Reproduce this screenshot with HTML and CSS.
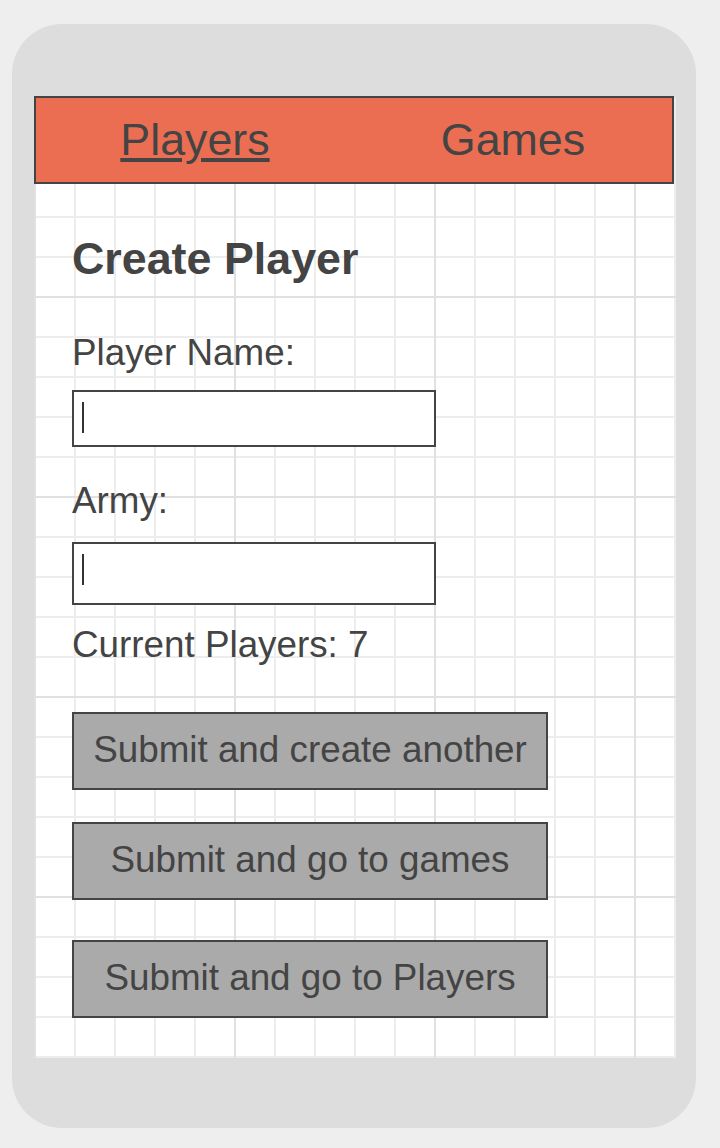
FILE: index.html
```html
<!DOCTYPE html>
<html lang="en">
<head>
<meta charset="utf-8">
<title>Create Player</title>
<link rel="stylesheet" href="styles.css">
</head>
<body>
<div class="phone">
  <div class="screen">
    <nav class="nav">
      <a class="nav-link nav-link--active" href="#">Players</a>
      <a class="nav-link" href="#">Games</a>
    </nav>
    <main class="form">
      <h1 class="title">Create Player</h1>
      <div class="label label--name">Player Name:</div>
      <div class="field field--name"><span class="caret"></span></div>
      <div class="label label--army">Army:</div>
      <div class="field field--army"><span class="caret"></span></div>
      <div class="label label--count">Current Players: 7</div>
      <button class="btn btn--first">Submit and create another</button>
      <button class="btn btn--second">Submit and go to games</button>
      <button class="btn btn--third">Submit and go to Players</button>
    </main>
  </div>
</div>
</body>
</html>
```

FILE: styles.css
```css
html, body {
  margin: 0;
  padding: 0;
}

body {
  background: #eeeeee;
  font-family: "Liberation Sans", Arial, sans-serif;
  color: #444444;
  width: 720px;
  height: 1148px;
  overflow: hidden;
}

.phone {
  box-sizing: border-box;
  margin: 24px 0 0 12px;
  width: 684px;
  height: 1104px;
  padding: 72px 20px 70px 22px;
  border-radius: 50px;
  background: #dddddd;
}

.screen {
  width: 642px;
  height: 962px;
  background-color: #ffffff;
  background-image:
    linear-gradient(to right, #e1e1e1 2px, transparent 2px),
    linear-gradient(to bottom, #e1e1e1 2px, transparent 2px),
    linear-gradient(to right, #ededed 2px, transparent 2px),
    linear-gradient(to bottom, #ededed 2px, transparent 2px);
  background-size: 200px 200px, 200px 200px, 40px 40px, 40px 40px;
}

.nav {
  box-sizing: border-box;
  display: flex;
  width: 640px;
  height: 88px;
  border: 2px solid #444444;
  background: #ec6e52;
  padding-bottom: 1px;
}

.nav-link {
  flex: 1;
  text-align: center;
  font-size: 44.8px;
  line-height: 83px;
  color: #444444;
  text-decoration: none;
}

.nav-link--active {
  text-decoration: underline;
}

.form {
  padding-left: 38px;
}

.title {
  margin: 49px 0 0;
  font-size: 44.8px;
  font-weight: bold;
  line-height: 51px;
}

.label {
  font-size: 36.8px;
  line-height: 41px;
}

.label--name {
  margin-top: 48px;
}

.label--army {
  margin-top: 33px;
}

.label--count {
  margin-top: 19px;
}

.field {
  box-sizing: border-box;
  width: 364px;
  border: 2px solid #444444;
  background: #ffffff;
  padding: 10px 0 0 8px;
}

.field--name {
  margin-top: 17px;
  height: 57px;
}

.field--army {
  margin-top: 21px;
  height: 63px;
}

.caret {
  display: block;
  width: 2px;
  height: 31px;
  background: #333333;
}

.btn {
  display: block;
  box-sizing: border-box;
  width: 476px;
  height: 78px;
  margin: 0;
  padding: 0 0 3px;
  border: 2px solid #444444;
  border-radius: 0;
  background: #aaaaaa;
  color: #444444;
  font-family: "Liberation Sans", Arial, sans-serif;
  font-size: 36.8px;
  line-height: 71px;
  text-align: center;
}

.btn--first {
  margin-top: 47px;
}

.btn--second {
  margin-top: 32px;
}

.btn--third {
  margin-top: 40px;
}
```
